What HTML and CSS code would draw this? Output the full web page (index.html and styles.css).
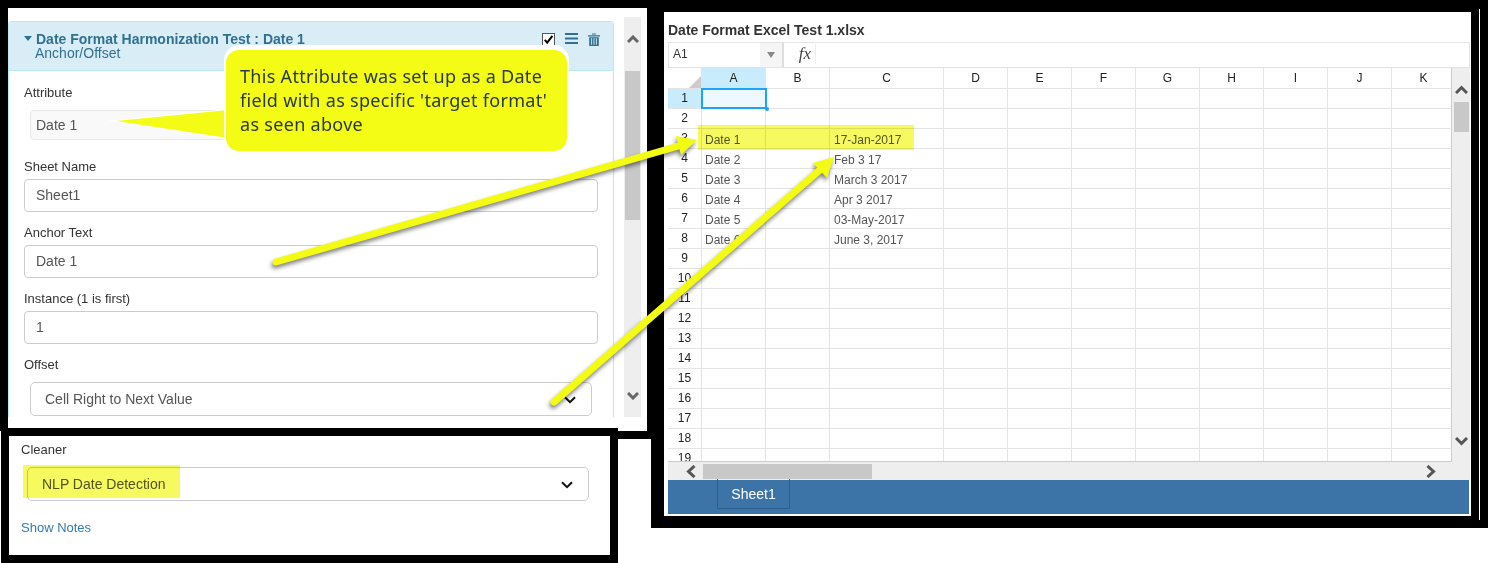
FILE: index.html
```html
<!DOCTYPE html>
<html lang="en">
<head>
<meta charset="utf-8">
<title>Date Format Harmonization</title>
<link rel="stylesheet" href="styles.css">
</head>
<body>
<div class="canvas">
  <div class="left-col">
    <div class="frame-top">
      <div class="frame-top-inner">
        <section class="panel">
          <header class="panel-head">
            <div class="panel-titles">
              <div class="panel-title"><span class="caret"></span>Date Format Harmonization Test : Date 1</div>
              <div class="panel-sub">Anchor/Offset</div>
            </div>
            <div class="panel-icons">
              <svg class="ico" width="13" height="13" viewBox="0 0 13 13"><rect x=".5" y=".5" width="12" height="12" fill="#fff" stroke="#555"/><path d="M2.8 6.8 5.2 9.6 10.4 2.8" fill="none" stroke="#000" stroke-width="2"/></svg>
              <svg class="ico" width="13" height="11" viewBox="0 0 13 11"><path d="M0 1h13M0 5.5h13M0 10h13" stroke="#31708f" stroke-width="2"/></svg>
              <svg class="ico" width="12" height="13" viewBox="0 0 12 13"><path d="M4 1.6V.5h4v1.1M0 2.2h12v1.4H0zM1.2 4.2h9.6V13H1.2z" fill="#31708f"/><path d="M3.6 5.2v6.6M6 5.2v6.6M8.4 5.2v6.6" stroke="#d9edf7" stroke-width=".9"/></svg>
            </div>
          </header>
          <div class="panel-body">
            <label class="lbl lbl-first">Attribute</label>
            <div class="field field-short">Date 1</div>
            <label class="lbl">Sheet Name</label>
            <div class="field">Sheet1</div>
            <label class="lbl">Anchor Text</label>
            <div class="field">Date 1</div>
            <label class="lbl">Instance (1 is first)</label>
            <div class="field">1</div>
            <label class="lbl lbl-offset">Offset</label>
            <div class="field field-select">Cell Right to Next Value
              <svg class="sel-chev" width="12" height="8" viewBox="0 0 12 8"><path d="M1 1.2 6 6.2 11 1.2" fill="none" stroke="#111" stroke-width="2"/></svg>
            </div>
          </div>
        </section>
        <div class="vbar">
          <svg class="vbar-up" width="12" height="8" viewBox="0 0 12 8"><path d="M1 7 6 2 11 7" fill="none" stroke="#666" stroke-width="3"/></svg>
          <div class="vbar-thumb"></div>
          <svg class="vbar-down" width="12" height="8" viewBox="0 0 12 8"><path d="M1 1 6 6 11 1" fill="none" stroke="#666" stroke-width="3"/></svg>
        </div>
      </div>
    </div>
    <div class="bottom-row">
      <div class="frame-bottom">
        <label class="lbl-clean">Cleaner</label>
        <div class="field field-select field-clean">NLP Date Detection
          <svg class="sel-chev" width="12" height="8" viewBox="0 0 12 8"><path d="M1 1.2 6 6.2 11 1.2" fill="none" stroke="#111" stroke-width="2"/></svg>
        </div>
        <a class="notes">Show Notes</a>
      </div>
      <div class="bottom-gap"></div>
    </div>
  </div>

  <div class="sheet-frame">
    <div class="sheet">
      <div class="sheet-title">Date Format Excel Test 1.xlsx</div>
      <div class="formula">
        <div class="name-box">A1</div>
        <div class="name-drop"><span class="drop-tri"></span></div>
        <div class="fx">fx</div>
      </div>
      <div class="grid-row">
        <div class="table-wrap">
          <table class="grid">
            <colgroup><col class="c-head"><col class="c-64"><col class="c-64"><col class="c-114"><col class="c-64"><col class="c-64"><col class="c-64"><col class="c-64"><col class="c-64"><col class="c-64"><col class="c-64"><col class="c-k"></colgroup>
            <thead><tr><th class="corner"><span class="corner-tri"></span></th><th class="on">A</th><th>B</th><th>C</th><th>D</th><th>E</th><th>F</th><th>G</th><th>H</th><th>I</th><th>J</th><th>K</th></tr></thead>
            <tbody>
              <tr><th class="on">1</th><td class="sel"><span class="sel-box"></span><span class="sel-dot"></span></td><td></td><td></td><td></td><td></td><td></td><td></td><td></td><td></td><td></td><td></td></tr>
              <tr><th>2</th><td></td><td></td><td></td><td></td><td></td><td></td><td></td><td></td><td></td><td></td><td></td></tr>
              <tr><th>3</th><td>Date 1</td><td></td><td>17-Jan-2017</td><td></td><td></td><td></td><td></td><td></td><td></td><td></td><td></td></tr>
              <tr><th>4</th><td>Date 2</td><td></td><td>Feb 3 17</td><td></td><td></td><td></td><td></td><td></td><td></td><td></td><td></td></tr>
              <tr><th>5</th><td>Date 3</td><td></td><td>March 3 2017</td><td></td><td></td><td></td><td></td><td></td><td></td><td></td><td></td></tr>
              <tr><th>6</th><td>Date 4</td><td></td><td>Apr 3 2017</td><td></td><td></td><td></td><td></td><td></td><td></td><td></td><td></td></tr>
              <tr><th>7</th><td>Date 5</td><td></td><td>03-May-2017</td><td></td><td></td><td></td><td></td><td></td><td></td><td></td><td></td></tr>
              <tr><th>8</th><td>Date 6</td><td></td><td>June 3, 2017</td><td></td><td></td><td></td><td></td><td></td><td></td><td></td><td></td></tr>
              <tr><th>9</th><td></td><td></td><td></td><td></td><td></td><td></td><td></td><td></td><td></td><td></td><td></td></tr>
              <tr><th>10</th><td></td><td></td><td></td><td></td><td></td><td></td><td></td><td></td><td></td><td></td><td></td></tr>
              <tr><th>11</th><td></td><td></td><td></td><td></td><td></td><td></td><td></td><td></td><td></td><td></td><td></td></tr>
              <tr><th>12</th><td></td><td></td><td></td><td></td><td></td><td></td><td></td><td></td><td></td><td></td><td></td></tr>
              <tr><th>13</th><td></td><td></td><td></td><td></td><td></td><td></td><td></td><td></td><td></td><td></td><td></td></tr>
              <tr><th>14</th><td></td><td></td><td></td><td></td><td></td><td></td><td></td><td></td><td></td><td></td><td></td></tr>
              <tr><th>15</th><td></td><td></td><td></td><td></td><td></td><td></td><td></td><td></td><td></td><td></td><td></td></tr>
              <tr><th>16</th><td></td><td></td><td></td><td></td><td></td><td></td><td></td><td></td><td></td><td></td><td></td></tr>
              <tr><th>17</th><td></td><td></td><td></td><td></td><td></td><td></td><td></td><td></td><td></td><td></td><td></td></tr>
              <tr><th>18</th><td></td><td></td><td></td><td></td><td></td><td></td><td></td><td></td><td></td><td></td><td></td></tr>
              <tr><th>19</th><td></td><td></td><td></td><td></td><td></td><td></td><td></td><td></td><td></td><td></td><td></td></tr>
            </tbody>
          </table>
        </div>
        <div class="svbar">
          <svg class="svbar-up" width="13" height="9" viewBox="0 0 13 9"><path d="M1 8 6.5 2.5 12 8" fill="none" stroke="#555" stroke-width="3"/></svg>
          <div class="svbar-thumb"></div>
          <svg class="svbar-down" width="13" height="9" viewBox="0 0 13 9"><path d="M1 1 6.5 6.5 12 1" fill="none" stroke="#555" stroke-width="3"/></svg>
        </div>
      </div>
      <div class="hbar">
        <svg class="hbar-left" width="10" height="13" viewBox="0 0 10 13"><path d="M8.500 1 2.500 6.500 8.500 12" fill="none" stroke="#555" stroke-width="3"/></svg>
        <div class="hbar-thumb"></div>
        <svg class="hbar-right" width="10" height="13" viewBox="0 0 10 13"><path d="M1.500 1 7.500 6.500 1.500 12" fill="none" stroke="#555" stroke-width="3"/></svg>
      </div>
      <div class="tabs"><div class="tab">Sheet1</div></div>
    </div>
    <div class="rule"></div>
  </div>

  <div class="mark mark-row"></div>
  <div class="mark mark-clean"></div>

  <svg class="arrows" width="1488" height="563" viewBox="0 0 1488 563">
    <g class="arrow">
      <path d="M276 262 682 145" fill="none" stroke="#f3fb12" stroke-width="7" stroke-linecap="round"/>
      <path d="M697 140 676 136 681 155Z" fill="#f3fb12"/>
    </g>
    <g class="arrow">
      <path d="M554 402 821 169" fill="none" stroke="#f3fb12" stroke-width="7" stroke-linecap="round"/>
      <path d="M834 157 813 163 827 178Z" fill="#f3fb12"/>
    </g>
  </svg>

  <div class="callout">
    <svg class="callout-tail" width="114" height="34" viewBox="0 0 114 34"><path d="M114 1 2 12 114 29Z" fill="#f4fb14" stroke="#fff" stroke-width="2" stroke-miterlimit="30" paint-order="stroke"/></svg>
    <div class="callout-body">This Attribute was set up as a Date<br>field with as specific 'target format'<br>as seen above</div>
  </div>
</div>
</body>
</html>
```
FILE: styles.css
```css
* { box-sizing: border-box; }
html, body { margin: 0; padding: 0; background: #fff; overflow: hidden; }
body { font-family: "Liberation Sans", Arial, sans-serif; color: #333; }

.canvas { position: relative; display: flex; width: 1488px; height: 563px; }

/* left column */
.left-col { width: 651px; flex: none; display: flex; flex-direction: column; }
.frame-top { height: 431px; background: #000; padding: 8px 4px 0 8px; }
.frame-top-inner { height: 100%; background: #fff; display: flex; align-items: flex-start; }
.panel { width: 606px; height: 396px; margin-top: 13px; border: 1px solid #bce8f1; border-bottom: 0; border-radius: 4px 4px 0 0; overflow: hidden; }
.panel-head { height: 49px; background: #d9edf7; border-bottom: 1px solid #bce8f1; display: flex; justify-content: space-between; color: #31708f; padding: 9px 13px 0 15px; }
.panel-title { font-size: 14px; font-weight: 700; line-height: 16px; white-space: nowrap; }
.caret { display: inline-block; width: 0; height: 0; border: 4px solid transparent; border-top: 5px solid #31708f; border-bottom: 0; margin-right: 4px; vertical-align: 3px; }
.panel-sub { font-size: 14px; line-height: 13px; padding-left: 11px; }
.panel-icons { display: flex; gap: 10px; align-items: flex-start; padding-top: 2px; }
.ico { display: block; }

.panel-body { padding: 0 15px; }
.lbl { display: block; height: 16px; margin: 13px 0 4px; font-size: 13px; line-height: 16px; color: #333; }
.lbl-first { margin: 14px 0 9px; }
.lbl-offset { margin-bottom: 9px; }
.field { position: relative; height: 33px; border: 1px solid #ccc; border-radius: 4px; font-size: 14px; line-height: 31px; color: #555; padding-left: 11px; background: #fff; }
.field-short { width: 196px; height: 30px; line-height: 28px; margin: 0 0 19px 6px; padding-left: 5px; background: #f9f9f9; border-color: #e8e8e8; }
.field-select { height: 34px; line-height: 32px; margin: 0 6px; padding-left: 14px; border-radius: 5px; }
.sel-chev { position: absolute; right: 15px; top: 13px; }

.vbar { width: 17px; height: 400px; margin: 9px 0 0 10px; background: #eee; display: flex; flex-direction: column; align-items: center; }
.vbar-up { margin-top: 18px; }
.vbar-thumb { width: 15px; height: 149px; margin-top: 28px; background: #c8c8c8; }
.vbar-down { margin-top: auto; margin-bottom: 17px; }

.bottom-row { display: flex; margin-top: -3px; position: relative; height: 135px; }
.frame-bottom { width: 617px; margin-left: 1px; height: 135px; border: 8px solid #000; background: #fff; padding: 6px 12px 0 12px; }
.lbl-clean { display: block; font-size: 13px; line-height: 16px; color: #333; }
.field-clean { margin: 9px 0 0 6px; width: 562px; }
.notes { display: block; margin-top: 19px; font-size: 13px; line-height: 16px; color: #337ab7; }
.bottom-gap { flex: 1; height: 11px; margin-top: 3px; border-top: 8px solid #000; }

/* spreadsheet */
.sheet-frame { width: 837px; height: 528px; flex: none; background: #000; padding: 12px 0 12px 13px; display: flex; align-items: flex-start; }
.sheet { width: 807px; height: 504px; background: #fff; padding-left: 4px; flex: none; }
.rule { width: 1px; height: 511px; margin: -3px 0 0 8px; background: #fff; }
.sheet-title { height: 30px; padding: 11px 0 0 0; font-size: 14px; font-weight: 700; line-height: 15px; color: #333; }
.formula { display: flex; width: 802px; height: 26px; border: 1px solid #e4e4e4; }
.name-box { width: 91px; font-size: 12px; line-height: 22px; padding-left: 4px; color: #333; }
.name-drop { width: 24px; background: #f5f5f5; border-right: 2px solid #ddd; display: flex; align-items: center; justify-content: center; }
.drop-tri { width: 0; height: 0; border: 4px solid transparent; border-top: 6px solid #888; border-bottom: 0; }
.fx { width: 32px; border-right: 1px solid #eee; margin: 1px 0 3px; text-align: right; padding-right: 4px; font-family: "Liberation Serif", serif; font-style: italic; font-size: 17px; line-height: 19px; color: #444; }

.grid-row { display: flex; width: 802px; }
.table-wrap { width: 784px; height: 394px; overflow: hidden; border-bottom: 1px solid #ccc; }
.grid { border-collapse: separate; border-spacing: 0; table-layout: fixed; width: 784px; font-size: 12px; }
.c-head { width: 34px; } .c-64 { width: 64px; } .c-114 { width: 114px; } .c-k { width: 60px; }
.grid th, .grid td { height: 20px; padding: 0; border-right: 1px solid #e4e4e4; border-bottom: 1px solid #e4e4e4; font-weight: 400; line-height: 16px; }
.grid thead th { height: 21px; color: #222; text-align: center; }
.grid thead th:last-child { padding-left: 4px; }
.grid tbody th { color: #222; text-align: center; padding-bottom: 1px; }
.grid td { padding: 2px 0 0 3px; color: #555; white-space: nowrap; overflow: visible; }
.grid td:nth-child(4) { padding-left: 4px; }
.grid tr > :last-child { border-right-color: #ccc; }
.grid .on { background: #c9ecfd; }
.corner { position: relative; }
.corner-tri { position: absolute; right: 0; bottom: 0; width: 0; height: 0; border-style: solid; border-width: 0 0 12px 12px; border-color: transparent transparent #ccc transparent; }
.sel { position: relative; background: #eef9ff; }
.sel-box { position: absolute; left: -1px; top: -1px; width: 66px; height: 21px; border: 2px solid #1aa5f5; }
.sel-dot { position: absolute; left: 63px; top: 18px; width: 4px; height: 4px; border-radius: 50%; background: #1aa5f5; }

.svbar { width: 18px; height: 394px; background: #eee; display: flex; flex-direction: column; align-items: center; }
.svbar-up { margin-top: 17px; }
.svbar-thumb { width: 15px; height: 30px; margin-top: 8px; background: #c8c8c8; }
.svbar-down { margin-top: auto; margin-bottom: 16px; }
.hbar { display: flex; align-items: center; width: 802px; height: 18px; background: #eee; position: relative; }
.hbar-left { margin-left: 18px; }
.hbar-thumb { width: 169px; height: 15px; margin-left: 7px; background: #c8c8c8; }
.hbar-right { margin-left: auto; margin-right: 34px; }
.tabs { width: 801px; height: 35px; background: #3d74a8; padding-left: 49px; }
.tab { position: relative; width: 73px; height: 30px; margin-top: -1px; border: 1px solid #2d5f8e; border-top: 0; color: #fff; font-size: 14px; line-height: 30px; text-align: center; }

/* overlays */
.mark { position: absolute; background: #f6fa5e; mix-blend-mode: multiply; }
.mark-row { left: 698px; top: 125px; width: 216px; height: 25px; }
.mark-clean { left: 23px; top: 465px; width: 157px; height: 33px; }
.arrows { position: absolute; left: 0; top: 0; pointer-events: none; }
.arrow { filter: drop-shadow(-1px 3px 2px rgba(0, 0, 0, .5)); }
.callout { position: absolute; left: 226px; top: 50px; width: 341px; height: 101px; }
.callout-tail { position: absolute; left: -112px; top: 59px; overflow: visible; }
.callout-body { position: relative; height: 101px; background: #f4fb14; border-radius: 13px; box-shadow: 0 -3px 0 2px #fff; padding: 14px 0 0 14px; font-family: "Noto Sans", "Open Sans", sans-serif; font-size: 18px; letter-spacing: .3px; line-height: 24px; color: #2b3a3f; white-space: nowrap; }
```
